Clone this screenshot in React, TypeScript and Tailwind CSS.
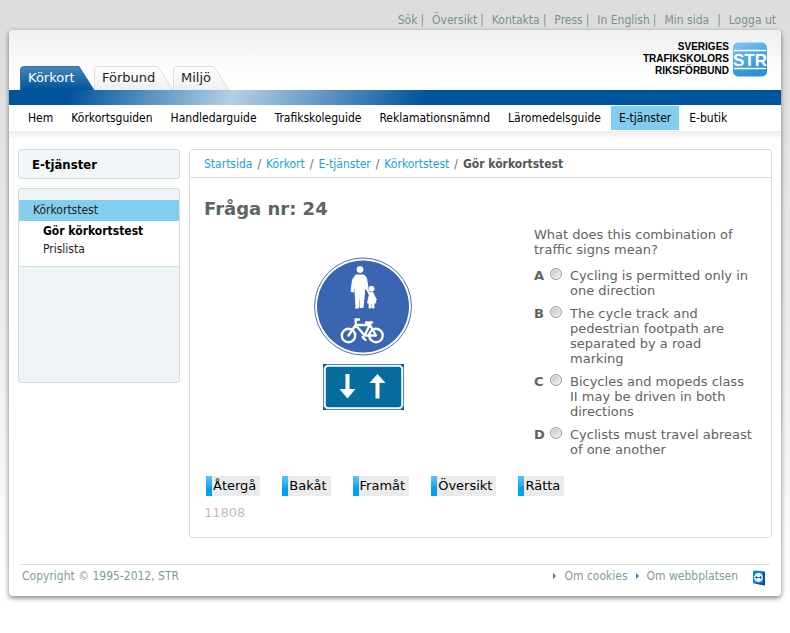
const tahoma = "font-['DejaVu_Sans_Condensed','DejaVu_Sans',sans-serif]";

const topLinks = ["Sök", "Översikt", "Kontakta", "Press", "In English", "Min sida", "Logga ut"];

const navLinks = [
  "Hem",
  "Körkortsguiden",
  "Handledarguide",
  "Trafikskoleguide",
  "Reklamationsnämnd",
  "Läromedelsguide",
  "E-tjänster",
  "E-butik",
];

const answers = [
  { key: "A", text: "Cycling is permitted only in one direction" },
  { key: "B", text: "The cycle track and pedestrian footpath are separated by a road marking" },
  { key: "C", text: "Bicycles and mopeds class II may be driven in both directions" },
  { key: "D", text: "Cyclists must travel abreast of one another" },
];

const actions = ["Återgå", "Bakåt", "Framåt", "Översikt", "Rätta"];

function TopBar() {
  return (
    <nav aria-label="Service" className="flex h-[30px] items-end justify-end px-[14px] pb-[2px] text-[12px] leading-4 text-[#7c9090]">
      {topLinks.map((label, i) => (
        <span key={label} className="flex">
          <a href="#" className="whitespace-nowrap">{label}</a>
          {i < topLinks.length - 1 && (
            <span className={i === 5 ? "px-2" : "pr-2 pl-[3px]"}>|</span>
          )}
        </span>
      ))}
    </nav>
  );
}

function Tab({ label, width, active }: { label: string; width: number; active?: boolean }) {
  const shape = `M0.5 24V4Q0.5 0.5 4 0.5H${width - 15}L${width} 24`;
  return (
    <a href="#" className={`relative flex h-6 items-center pl-2 font-['DejaVu_Sans',Verdana,sans-serif] text-[13px] ${active ? "text-white" : "text-[#222]"}`} style={{ width }}>
      <svg className="absolute inset-0" width={width} height="24" aria-hidden="true">
        <defs>
          <linearGradient id={`tab-${label}`} x1="0" y1="0" x2="0" y2="1">
            <stop offset="0" stopColor={active ? "#4586ba" : "#ffffff"} />
            <stop offset="1" stopColor={active ? "#00549b" : "#eeeff0"} />
          </linearGradient>
        </defs>
        <path d={shape} fill={`url(#tab-${label})`} stroke={active ? "#2d6ea6" : "#dcdfe0"} />
      </svg>
      <span className="relative">{label}</span>
    </a>
  );
}

function Logo() {
  return (
    <div className="mr-[14px] mb-[13px] flex items-center gap-1">
      <div className="text-right font-['Liberation_Sans',Arial,sans-serif] text-[10px] leading-[12px] font-bold text-black">
        SVERIGES
        <br />
        TRAFIKSKOLORS
        <br />
        RIKSFÖRBUND
      </div>
      <svg width="34" height="35" viewBox="0 0 34 35" role="img" aria-label="STR">
        <defs>
          <linearGradient id="logo" x1="0" y1="0" x2="0.4" y2="1">
            <stop offset="0" stopColor="#86c6ee" />
            <stop offset="0.5" stopColor="#50abe2" />
            <stop offset="1" stopColor="#2a90d6" />
          </linearGradient>
        </defs>
        <rect x="0" y="0.5" width="34" height="34" rx="5" fill="url(#logo)" />
        <path d="M1 8.5H33M1 26.5H33" stroke="#fff" strokeWidth="1.500" />
        <text x="17" y="24" textAnchor="middle" fontFamily="Liberation Sans, Arial, sans-serif" fontWeight="bold" fontSize="17" fill="#fff">STR</text>
      </svg>
    </div>
  );
}

function Sidebar() {
  return (
    <aside className="w-[162px] shrink-0 text-[12px] text-[#222]">
      <h2 className="mb-[9px] h-[30px] rounded-[3px] border border-[#d3dddd] bg-[#f1f6f8] pl-[13px] text-[13px] leading-[29px] font-bold text-black">
        E-tjänster
      </h2>
      <div className="h-[195px] rounded-[3px] border border-[#d3dddd] bg-[#eff4f7] pt-[11px]">
        <a href="#" className="block h-[21px] bg-[#83ceef] pl-[14px] leading-[21px]">Körkortstest</a>
        <div className="h-[46px] border-b border-[#d3dddd] bg-white pl-6 leading-[18px]">
          <a href="#" className="block pt-[1px] font-bold text-black">Gör körkortstest</a>
          <a href="#" className="block">Prislista</a>
        </div>
      </div>
    </aside>
  );
}

function Signs() {
  return (
    <svg width="100" height="154" viewBox="0 0 100 154" role="img" aria-label="Traffic signs">
      <circle cx="50" cy="49.500" r="48.500" fill="#fff" stroke="#4a6fae" strokeWidth="1" />
      <circle cx="50" cy="49.500" r="46" fill="#3a65b0" />
      <g fill="#fff" stroke="#fff" strokeLinecap="round" strokeLinejoin="round">
        <circle cx="47" cy="12.500" r="3.200" strokeWidth="0.500" />
        <path d="M43 18H51L53.500 21L55 31.500L52.500 32.500L51 26L51.500 36L50 50.500H47L47.500 38H46.500L45.500 51H42.500L43 49L42 35L41.500 26L40.500 35L38 34.500L39.500 23Z" strokeWidth="1" />
        <path d="M54 32L56.500 37" strokeWidth="1.800" fill="none" />
        <circle cx="58.500" cy="31.800" r="2.700" strokeWidth="0.500" />
        <path d="M57 35.500H60L63.500 43L62 44L60.500 40L63 46H61V51H59V46.500H58V51H56V46H54.500L56 39Z" strokeWidth="0.800" />
      </g>
      <g fill="none" stroke="#fff" strokeWidth="2.400" strokeLinecap="round" strokeLinejoin="round">
        <circle cx="35.500" cy="78.500" r="6.700" />
        <circle cx="63" cy="78.500" r="6.700" />
        <path d="M35.500 78.500L43 67.500L42.500 62.500H46M43 68H57M43.500 69L51.500 78.500L57 67.500M53 65.500H59M57 68L63 78.500H51.500M49.500 80L52.500 83" />
      </g>
      <rect x="10" y="107" width="81" height="46" fill="#17516c" />
      <rect x="11.500" y="108.500" width="78" height="43" rx="4" fill="#066c9e" stroke="#fff" strokeWidth="2.500" />
      <rect x="10.500" y="107.500" width="80" height="45" rx="5" fill="none" stroke="#1782a3" strokeWidth="0.800" />
      <g fill="#fff">
        <path d="M32.500 117H36.500V132H42.500L34.500 141.500L26.500 132H32.500Z" />
        <path d="M62.500 141.500H66.500V126H72.500L64.500 117L56.500 126H62.500Z" />
      </g>
    </svg>
  );
}

function Question() {
  return (
    <fieldset className="w-[223px] text-[13px] leading-[15px] text-[#5e6464]">
      <legend className="mb-[11px]">What does this combination of traffic signs mean?</legend>
      <div className="flex flex-col gap-2 pr-[3px]">
        {answers.map((a) => (
          <label key={a.key} className="flex">
            <span className="w-4 shrink-0 font-bold">{a.key}</span>
            <input
              type="radio"
              name="answer"
              className="mr-2 h-3 w-3 shrink-0 appearance-none rounded-full border border-[#9a9a9a] bg-linear-to-br from-[#bdbdbd] to-[#f8f8f8] shadow-[inset_0_0_0_1px_#f0f0f0]"
            />
            <span>{a.text}</span>
          </label>
        ))}
      </div>
    </fieldset>
  );
}

function Breadcrumb() {
  const crumbs = ["Startsida", "Körkort", "E-tjänster", "Körkortstest"];
  return (
    <nav aria-label="Breadcrumb" className="flex h-7 border-b border-[#d3dddd] pl-[14px] text-[12px] leading-7 text-[#666]">
      {crumbs.map((c) => (
        <span key={c}>
          <a href="#" className="text-[#1c9fd8]">{c}</a>
          <span className="px-[5px]">/</span>
        </span>
      ))}
      <b className="text-[#555]">Gör körkortstest</b>
    </nav>
  );
}

function RemoteIcon() {
  return (
    <svg width="14" height="16" viewBox="0 0 14 16" aria-hidden="true">
      <path d="M2 0.500L11 1L13 2.500V15.500L11 15L2 13.500Q1 13.500 1 12.500V1.500Q1 0.500 2 0.500Z" fill="#1186e0" />
      <path d="M11 1L13 2.500V15.500L2 13.500L11 13Z" fill="#0a4aa2" />
      <circle cx="6.500" cy="7.500" r="4.400" fill="#fff" />
      <path d="M2.800 7.500L5 5.700V7H8V5.700L10.200 7.500L8 9.300V8H5V9.300Z" fill="#0d5fb8" />
    </svg>
  );
}

export default function App() {
  return (
    <div className={`min-h-screen bg-linear-to-b from-[#dcdcdc] via-[#ececec] via-50% to-white to-95% ${tahoma}`}>
      <TopBar />
      <div className="mx-[9px] overflow-hidden rounded-[4px] bg-white shadow-[0_2px_5px_rgba(0,0,0,0.5)]">
        <header>
          <div className="flex h-[60px] items-end justify-between bg-linear-to-b from-[#efefef] to-white to-80%">
            <nav aria-label="Sections" className="flex pl-[11px]">
              <Tab label="Körkort" width={74} active />
              <Tab label="Förbund" width={79} />
              <Tab label="Miljö" width={56} />
            </nav>
            <Logo />
          </div>
          <div className="h-[15px] bg-[linear-gradient(110deg,#00549b_8%,#b5d0e4_29%,#00549b_54%)]" />
          <nav aria-label="Main" className="flex h-[26px] items-center gap-[2px] pl-[11px] text-[12px] text-black">
            {navLinks.map((label) => (
              <a
                key={label}
                href="#"
                className={`h-6 px-2 leading-6 whitespace-nowrap ${label === "E-tjänster" ? "bg-[#83ceef]" : ""}`}
              >
                {label}
              </a>
            ))}
          </nav>
          <div className="h-[18px] bg-linear-to-b from-[#ececec] to-white to-50%" />
        </header>

        <div className="flex items-start gap-[9px] px-[9px]">
          <Sidebar />
          <main className="min-w-0 flex-1 rounded-[3px] border border-[#d8dddd] font-['DejaVu_Sans',Verdana,sans-serif]">
            <div className={tahoma}>
              <Breadcrumb />
            </div>
            <div className="px-[14px] pb-4">
              <h1 className="pt-5 text-[18px] leading-[22px] font-bold text-[#5e6464]">Fråga nr: 24</h1>
              <div className="flex gap-3 pt-[7px]">
                <div className="flex flex-1 justify-center pt-[30px]">
                  <Signs />
                </div>
                <Question />
              </div>
              <div className="flex gap-[22px] pt-[19px] pl-[2px]">
                {actions.map((label) => (
                  <button key={label} type="button" className="flex h-5 bg-[#ebebeb] pr-1 text-[13px] leading-5 text-black">
                    <span className="mr-px h-5 w-[6px] bg-linear-to-b from-[#5cc4f5] to-[#00a2ee] to-60%" />
                    {label}
                  </button>
                ))}
              </div>
              <p className="pt-2 text-[13px] leading-[17px] text-[#bdbdbd]">11808</p>
            </div>
          </main>
        </div>

        <footer className="mx-[11px] mt-[26px] flex h-8 justify-between border-t border-[#d9dede] pr-1 text-[12px] leading-[22px] text-[#7f9a9e]">
          <span className="pl-[2px]">Copyright © 1995-2012, STR</span>
          <div className="flex">
            {["Om cookies", "Om webbplatsen"].map((label) => (
              <a key={label} href="#" className="flex items-center self-start pr-2">
                <svg width="11" height="6" viewBox="0 0 11 6" className="shrink-0" aria-hidden="true">
                  <path d="M0 0L3 3L0 6Z" fill="#2480b8" />
                </svg>
                {label}
              </a>
            ))}
            <span className="pt-[5px] pl-[6px]">
              <RemoteIcon />
            </span>
          </div>
        </footer>
      </div>
    </div>
  );
}
